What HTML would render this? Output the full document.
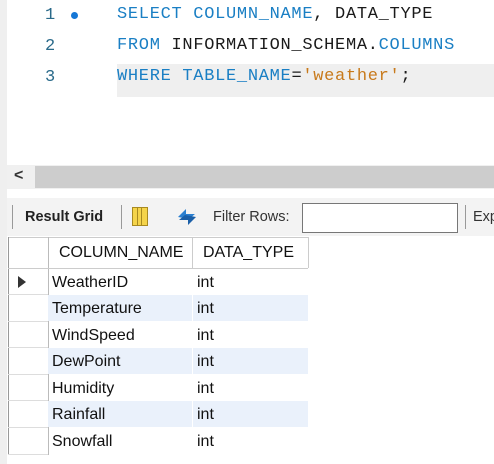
<!DOCTYPE html>
<html><head><style>
body{margin:0;width:494px;height:464px;background:#fff;position:relative;overflow:hidden;font-family:"Liberation Sans",sans-serif}
.a{position:absolute}
.code{font-family:"Liberation Mono",monospace;font-size:17px;letter-spacing:0.7px;white-space:pre;color:#1a1a1a}
.k{color:#1a7fc4}.s{color:#c87a1c}
.ln{color:#2a6a8a;font-family:"Liberation Mono",monospace;font-size:17px}
.r{position:absolute;left:48px;width:260px;height:26px}
.t{position:absolute;font-size:16px;color:#111}
</style></head><body>
<div class="a" style="left:0;top:0;width:7px;height:464px;background:#efefef"></div>
<div class="a" style="left:117px;top:64px;width:377px;height:33px;background:#efefef"></div>
<div class="a ln" style="left:45px;top:6px">1</div>
<div class="a" style="left:71px;top:12px;width:7px;height:7px;border-radius:50%;background:#1577d6"></div>
<div class="a ln" style="left:45px;top:37px">2</div>
<div class="a ln" style="left:45px;top:68px">3</div>
<div class="a code" style="left:117px;top:5px"><span class="k">SELECT COLUMN_NAME</span>, DATA_TYPE</div>
<div class="a code" style="left:117px;top:36px"><span class="k">FROM</span> INFORMATION_SCHEMA.<span class="k">COLUMNS</span></div>
<div class="a code" style="left:117px;top:67px"><span class="k">WHERE TABLE_NAME</span>=<span class="s">'weather'</span>;</div>
<div class="a" style="left:7px;top:165px;width:487px;height:24px;background:#f0f0f0"></div>
<div class="a" style="left:35px;top:166px;width:459px;height:22px;background:#cdcdcd"></div>
<div class="a" style="left:14px;top:167px;font-size:16px;font-weight:bold;color:#333">&lt;</div>
<div class="a" style="left:7px;top:198px;width:487px;height:38px;background:#f3f3f3"></div>
<div class="a" style="left:12px;top:205px;width:1px;height:24px;background:#999"></div>
<div class="a" style="left:25px;top:209px;font-size:14.5px;font-weight:bold;color:#222">Result Grid</div>
<div class="a" style="left:121px;top:205px;width:1px;height:24px;background:#999"></div>
<div class="a" style="left:132px;top:207px;width:16px;height:19px;background:#f5d44a;border:1px solid #a88a20;box-sizing:border-box"></div>
<div class="a" style="left:137px;top:207px;width:5px;height:19px;border-left:1px solid #a88a20;border-right:1px solid #a88a20;box-sizing:border-box"></div>
<svg class="a" style="left:175px;top:206px" width="24" height="22"><path d="M3 11 L11 3 L11 8 L20 8 L14 13 Z" fill="#2a7fd0"/><path d="M21 11 L13 19 L13 14 L4 14 L10 9 Z" fill="#1a5fa8"/></svg>
<div class="a" style="left:213px;top:209px;font-size:14.5px;color:#333">Filter Rows:</div>
<div class="a" style="left:302px;top:203px;width:156px;height:30px;border:1px solid #777;box-sizing:border-box;background:#fff"></div>
<div class="a" style="left:465px;top:205px;width:1px;height:24px;background:#999"></div>
<div class="a" style="left:473px;top:209px;font-size:14.5px;color:#333">Exp</div>

<div class="a" style="left:8px;top:237px;width:300px;height:1px;background:#ccc"></div>
<div class="a" style="left:8px;top:237px;width:1px;height:218px;background:#999"></div>
<div class="a" style="left:48px;top:237px;width:1px;height:218px;background:#bbb"></div>
<div class="a" style="left:192px;top:237px;width:1px;height:31px;background:#ccc"></div>
<div class="a" style="left:308px;top:237px;width:1px;height:31px;background:#ccc"></div>
<div class="a" style="left:8px;top:268px;width:300px;height:1px;background:#ccc"></div>
<div class="t" style="left:59px;top:244px">COLUMN_NAME</div>
<div class="t" style="left:203px;top:244px">DATA_TYPE</div>

<div class="r" style="top:295px;background:#eaf1fb"></div>
<div class="r" style="top:348px;background:#eaf1fb"></div>
<div class="r" style="top:401px;background:#eaf1fb"></div>
<div class="a" style="left:192px;top:269px;width:1px;height:186px;background:#fff"></div>
<div class="a" style="left:18px;top:276px;border-left:8px solid #333;border-top:6px solid transparent;border-bottom:6px solid transparent"></div>
<div class="t" style="left:52px;top:274px">WeatherID</div><div class="t" style="left:197px;top:274px">int</div>
<div class="t" style="left:52px;top:300px">Temperature</div><div class="t" style="left:197px;top:300px">int</div>
<div class="t" style="left:52px;top:327px">WindSpeed</div><div class="t" style="left:197px;top:327px">int</div>
<div class="t" style="left:52px;top:353px">DewPoint</div><div class="t" style="left:197px;top:353px">int</div>
<div class="t" style="left:52px;top:380px">Humidity</div><div class="t" style="left:197px;top:380px">int</div>
<div class="t" style="left:52px;top:406px">Rainfall</div><div class="t" style="left:197px;top:406px">int</div>
<div class="t" style="left:52px;top:433px">Snowfall</div><div class="t" style="left:197px;top:433px">int</div>
<div class="a" style="left:8px;top:294px;width:40px;height:1px;background:#ddd"></div>
<div class="a" style="left:8px;top:321px;width:40px;height:1px;background:#ddd"></div>
<div class="a" style="left:8px;top:347px;width:40px;height:1px;background:#ddd"></div>
<div class="a" style="left:8px;top:374px;width:40px;height:1px;background:#ddd"></div>
<div class="a" style="left:8px;top:400px;width:40px;height:1px;background:#ddd"></div>
<div class="a" style="left:8px;top:427px;width:40px;height:1px;background:#ddd"></div>
<div class="a" style="left:8px;top:454px;width:40px;height:1px;background:#ddd"></div>
</body></html>
